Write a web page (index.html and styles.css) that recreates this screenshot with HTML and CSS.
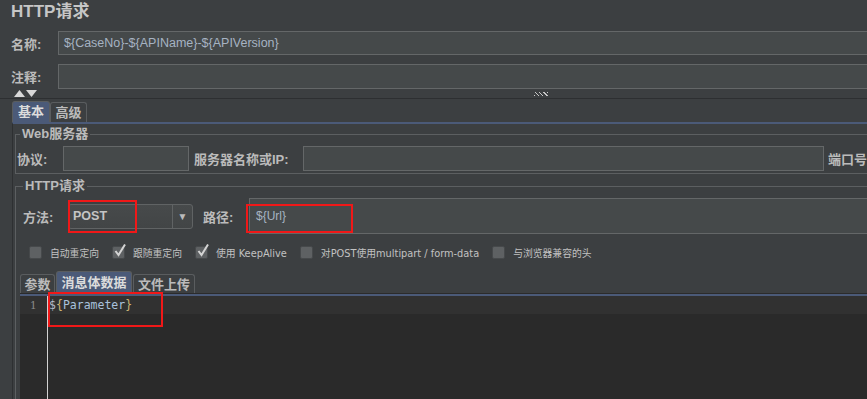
FILE: index.html
```html
<!DOCTYPE html>
<html lang="zh-CN">

<head>
  <meta charset="UTF-8" />
  <title>HTTP请求</title>
  <link rel="stylesheet" href="styles.css">
</head>

<body>
  <h1 class="title">HTTP请求</h1>

  <div class="field-row name-row">
    <label class="field-label">名称:</label>
    <div class="text-input">${CaseNo}-${APIName}-${APIVersion}</div>
  </div>

  <div class="field-row comment-row">
    <label class="field-label">注释:</label>
    <div class="text-input"></div>
  </div>

  <!-- collapse arrows + splitter grip -->
  <div class="split-bar">
    <svg class="arrows" width="24" height="8" viewBox="0 0 24 8">
      <polygon points="0,7 5.5,0 11,7" fill="#d8d8d8" />
      <polygon points="12,0 23,0 17.5,7" fill="#d8d8d8" />
    </svg>
    <span class="grip"></span>
  </div>

  <div class="tabs top-tabs">
    <span class="tab active">基本</span>
    <span class="tab">高级</span>
  </div>

  <div class="tab-panel">
    <fieldset class="group web-group">
      <legend>Web服务器</legend>
      <div class="server-row">
        <label class="field-label proto-label">协议:</label>
        <div class="text-input proto-input"></div>
        <label class="field-label host-label">服务器名称或IP:</label>
        <div class="text-input host-input"></div>
        <label class="field-label port-label">端口号</label>
      </div>
    </fieldset>

    <fieldset class="group http-group">
      <legend>HTTP请求</legend>
      <div class="method-row">
        <label class="field-label method-label">方法:</label>
        <div class="combo">
          <span class="combo-value">POST</span>
          <span class="combo-arrow">▼</span>
          <span class="mark mark-method"></span>
        </div>
        <label class="field-label path-label">路径:</label>
        <div class="text-input path-input">
          ${Url}
          <span class="mark mark-path"></span>
        </div>
      </div>

      <div class="check-row">
        <label class="check"><span class="box"></span>自动重定向</label>
        <label class="check"><span class="box checked"><svg width="14" height="14" viewBox="0 0 14 14"><path d="M2.5 7 L5.5 11 L12 0.5" fill="none" stroke="#d4d4d4" stroke-width="2" /></svg></span>跟随重定向</label>
        <label class="check"><span class="box checked"><svg width="14" height="14" viewBox="0 0 14 14"><path d="M2.5 7 L5.5 11 L12 0.5" fill="none" stroke="#d4d4d4" stroke-width="2" /></svg></span>使用 KeepAlive</label>
        <label class="check"><span class="box"></span>对POST使用multipart / form-data</label>
        <label class="check"><span class="box"></span>与浏览器兼容的头</label>
      </div>

      <div class="tabs body-tabs">
        <span class="tab params-tab">参数</span>
        <span class="tab active body-tab">消息体数据</span>
        <span class="tab files-tab">文件上传</span>
      </div>

      <div class="editor">
        <div class="current-line">
          <span class="gutter">1</span>
          <code class="code"><span class="tok">$</span><span class="brace">{</span>Parameter<span class="brace">}</span></code>
        </div>
        <div class="editor-rest">
          <span class="gutter"></span>
        </div>
        <span class="mark mark-body"></span>
      </div>
    </fieldset>
  </div>
</body>

</html>
```

FILE: styles.css
```css
* {
  margin: 0;
  padding: 0;
  box-sizing: border-box;
}

html,
body {
  width: 867px;
  height: 399px;
  overflow: hidden;
}

body {
  background: #3c3f41;
  color: #bbbbbb;
  font-family: "Liberation Sans", "Noto Sans CJK SC", sans-serif;
}

.title {
  height: 24px;
  line-height: 24px;
  padding-left: 11px;
  font-size: 17px;
  font-weight: bold;
  color: #c6c6c6;
}

/* name / comment rows */
.field-row {
  display: flex;
  align-items: center;
}

.name-row {
  margin-top: 7px;
  height: 24px;
}

.comment-row {
  margin-top: 9px;
  height: 25px;
}

.field-label {
  flex: none;
  font-size: 13px;
  font-weight: bold;
  color: #bbbbbb;
  white-space: nowrap;
}

.field-row .field-label {
  width: 58px;
  padding-left: 11px;
}

.text-input {
  position: relative;
  height: 100%;
  background: #45494a;
  border: 1px solid #646768;
  font-size: 12.5px;
  color: #a6b3c3;
  display: flex;
  align-items: center;
  padding-left: 5px;
  white-space: nowrap;
}

.field-row .text-input {
  flex: 1;
  margin-right: -4px;
}

.split-bar {
  position: relative;
  height: 10px;
  border-bottom: 1px solid #2d2f31;
}

.arrows {
  position: absolute;
  left: 14px;
  top: 1px;
}

.grip {
  position: absolute;
  left: 534px;
  top: 3px;
  width: 14px;
  height: 4px;
  background: repeating-linear-gradient(45deg, #c8c8c8 0 1px, transparent 1px 3px);
}

/* tabs */
.tabs {
  display: flex;
  align-items: flex-end;
  gap: 1px;
}

.tab {
  height: 20px;
  line-height: 19px;
  border: 1px solid #5a5d5f;
  border-bottom: none;
  border-radius: 3px 3px 0 0;
  font-size: 13px;
  font-weight: bold;
  text-align: center;
  color: #bbbbbb;
  white-space: nowrap;
}

.tab.active {
  height: 21px;
  line-height: 20px;
  background: #4b5a78;
  color: #dcdcdc;
}

.top-tabs {
  margin-top: 2px;
  height: 21px;
  padding-left: 12px;
  gap: 0;
}

.top-tabs .tab {
  width: 38px;
}

.top-tabs .tab + .tab {
  width: 37px;
}

.tab-panel {
  margin-left: 12px;
  border-top: 2px solid #4b5a78;
  border-left: 1px solid #2e3032;
  padding-left: 2px;
  height: 280px;
}

/* group boxes */
.group {
  border: 1px solid #5c5f61;
  border-right: none;
  min-width: 0;
}

.group legend {
  margin-left: 3px;
  padding: 0 2px;
  font-size: 13px;
  font-weight: bold;
  line-height: 16px;
  color: #bbbbbb;
}

.web-group {
  margin-top: 2px;
  padding: 4px 0 2px 1px;
}

.server-row {
  display: flex;
  align-items: center;
  height: 25px;
}

.proto-label {
  width: 46px;
}

.proto-input {
  width: 126px;
  flex: none;
}

.host-label {
  width: 109px;
  margin-left: 5px;
}

.host-input {
  width: 521px;
  flex: none;
}

.port-label {
  margin-left: 4px;
}

.http-group {
  margin-top: 4px;
  padding: 4px 0 0 4px;
  border-bottom: none;
  height: 240px;
}

.method-row {
  display: flex;
  align-items: center;
  height: 36px;
  padding-left: 3px;
}

.method-label {
  width: 45px;
}

.combo {
  position: relative;
  flex: none;
  display: flex;
  width: 125px;
  height: 25px;
  background: linear-gradient(#474a4b, #424546);
  border: 1px solid #606364;
  border-radius: 3px;
}

.combo-value {
  flex: 1;
  padding-left: 4px;
  line-height: 23px;
  font-size: 12.5px;
  font-weight: bold;
  color: #c4c4c4;
}

.combo-arrow {
  width: 20px;
  border-left: 1px solid #606364;
  text-align: center;
  line-height: 23px;
  font-size: 10px;
  color: #bbbbbb;
}

.path-label {
  width: 46px;
  margin-left: 10px;
}

.path-input {
  flex: 1;
  height: 36px;
  margin-right: -4px;
  padding-left: 6px;
  font-size: 12px;
}

/* red annotation boxes */
.mark {
  position: absolute;
  border: 2px solid #f01818;
  pointer-events: none;
}

.mark-method {
  left: -1px;
  top: -5px;
  width: 69px;
  height: 33px;
}

.mark-path {
  left: -4px;
  top: 5px;
  width: 107px;
  height: 29px;
}

.mark-body {
  left: 28px;
  top: -4px;
  width: 115px;
  height: 35px;
}

/* checkboxes */
.check-row {
  display: flex;
  align-items: center;
  gap: 13px;
  margin-top: 12px;
  height: 13px;
  padding-left: 9px;
}

.check {
  display: flex;
  align-items: center;
  gap: 8px;
  font-family: "DejaVu Sans", "Noto Sans CJK SC", sans-serif;
  font-size: 9.8px;
  color: #c2c2c2;
  white-space: nowrap;
}

.box {
  position: relative;
  width: 13px;
  height: 13px;
  background: #5e6163;
  border: 1px solid #46494b;
  border-radius: 2px;
}

.box svg {
  position: absolute;
  left: 0;
  top: -3px;
}

.body-tabs {
  margin-top: 12px;
  height: 23px;
}

.params-tab {
  width: 35px;
}

.body-tab {
  width: 76px;
}

.files-tab {
  width: 62px;
}

.body-tabs .tab.active {
  height: 23px;
  line-height: 22px;
}

/* editor */
.editor {
  position: relative;
  border-top: 2px solid #4b5a78;
  box-shadow: 0 -1px 0 #2b2b2b;
  background: #2a2a2a;
  height: 110px;
}

.current-line,
.editor-rest {
  display: flex;
}

.current-line {
  height: 18px;
  background: #313131;
}

.editor-rest {
  height: 92px;
}

.gutter {
  width: 28px;
  flex: none;
  border-right: 1px solid #d2d2d2;
  padding-left: 10px;
  font-family: "DejaVu Serif", serif;
  font-size: 10.5px;
  line-height: 18px;
  color: #8a8a8a;
}

.code {
  padding-left: 1px;
  font-family: "DejaVu Sans Mono", monospace;
  font-size: 11.5px;
  line-height: 18px;
  color: #a9c1dc;
}

.tok {
  color: #b3bccb;
}

.brace {
  color: #cdb574;
}
```
